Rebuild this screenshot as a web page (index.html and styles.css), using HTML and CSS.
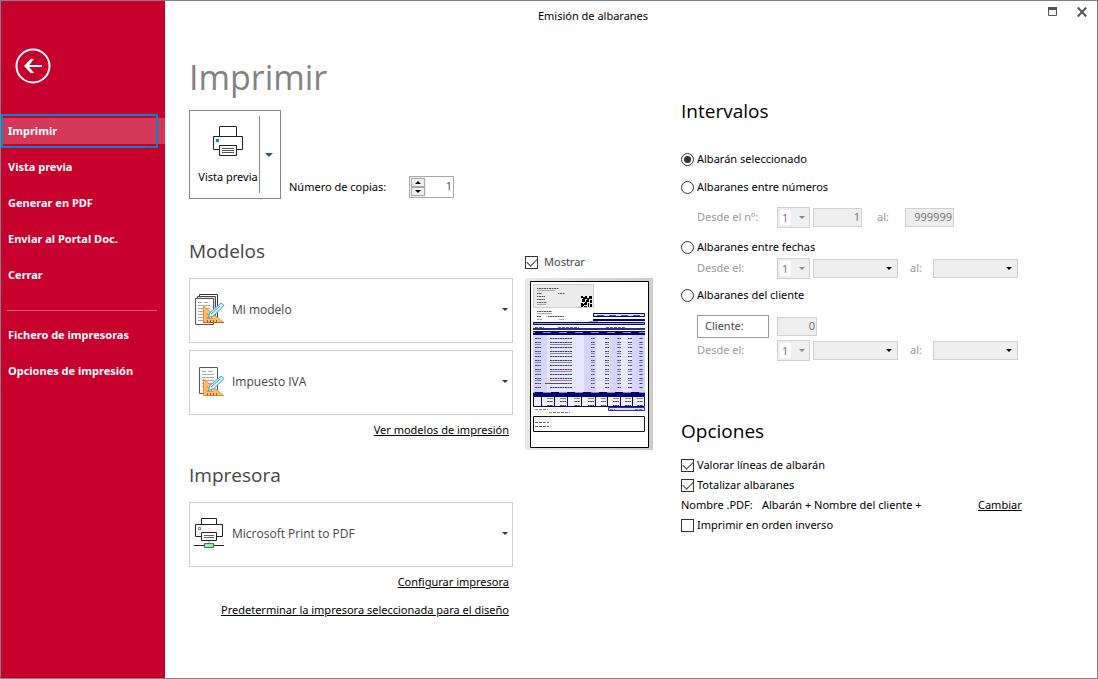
FILE: index.html
```html
<!DOCTYPE html>
<html lang="es">
<head>
<meta charset="utf-8">
<title>Emisión de albaranes</title>
<link rel="stylesheet" href="styles.css">
</head>
<body>
<div class="window">
  <aside class="sidebar">
    <button class="back" type="button" aria-label="Volver">
      <svg width="36" height="36" viewBox="0 0 36 36"><circle cx="18" cy="18" r="16.5" fill="none" stroke="#fff" stroke-width="2"/><path d="M27 18H11.500" fill="none" stroke="#fff" stroke-width="2"/><path d="M9 18l6.500-7H19l-5.500 7 5.500 7h-3.500z" fill="#fff"/></svg>
    </button>
    <nav class="menu">
      <a class="item current" href="#imprimir"><span>Imprimir</span></a>
      <a class="item" href="#vista"><span>Vista previa</span></a>
      <a class="item" href="#pdf"><span>Generar en PDF</span></a>
      <a class="item" href="#portal"><span>Enviar al Portal Doc.</span></a>
      <a class="item" href="#cerrar"><span>Cerrar</span></a>
      <hr class="rule">
      <a class="item" href="#fichero"><span>Fichero de impresoras</span></a>
      <a class="item" href="#opciones"><span>Opciones de impresión</span></a>
    </nav>
  </aside>

  <div class="content">
    <header class="titlebar">
      <span class="caption">Emisión de albaranes</span>
      <div class="winbuttons">
        <button type="button" aria-label="Maximizar"><svg width="9" height="10" viewBox="0 0 9 10"><path d="M.5 1v7.500h8V1" fill="none" stroke="#555"/><path d="M0 0h9v3H0z" fill="#555"/></svg></button>
        <button type="button" aria-label="Cerrar"><svg width="10" height="10" viewBox="0 0 10 10"><path d="M.8.5l8.400 9M9.200.5L.8 9.500" stroke="#555" stroke-width="2"/></svg></button>
      </div>
    </header>

    <main class="main">
      <section class="left">
        <h1>Imprimir</h1>
        <div class="toprow">
          <div class="split">
            <button class="preview-btn" type="button">
              <svg width="32" height="32" viewBox="0 0 32 32" fill="#fff" stroke="#222"><path d="M7.500 11V1.500h17V11"/><path d="M1.500 11.500h29v13h-29z"/><path d="M7.500 20.500h17v10h-17z"/><path d="M10 23.500h12M10 25.500h12M10 27.500h12" stroke="#555"/><path d="M4 14h3v3H4z" fill="#0f86c8" stroke="none"/></svg>
              <span>Vista previa</span>
            </button>
            <button class="split-arrow" type="button" aria-label="Más opciones"><i class="arrow blue"></i></button>
          </div>
          <label class="copies-label" for="copias">Número de copias:</label>
          <div class="spinner">
            <div class="steps">
              <button type="button" aria-label="Más"><i class="arrow up"></i></button>
              <button type="button" aria-label="Menos"><i class="arrow"></i></button>
            </div>
            <input id="copias" type="text" value="1">
          </div>
        </div>

        <div class="blocks">
          <div class="block">
            <h2 class="soft">Modelos</h2>
            <div class="cards">
              <label class="card">
                <svg width="32" height="34" viewBox="0 0 32 34"><path d="M5.500 5V1.500h18V28" fill="#fff" stroke="#333"/><path d="M3.500 5V3.500h18V29" fill="#ddd" stroke="#444"/><path d="M1.500 5.500h18v26h-18z" fill="#fff" stroke="#555"/><path d="M4 9.500h4m2 0h4M4 12.500h12M4 15.500h12M4 18.500h12M4 21.500h12M4 24.500h12M4 27.500h12" stroke="#aaa"/><path d="M9.500 13v16.500h20zM13 20.500l5.500 5H13z" fill="#fbbd6f" fill-rule="evenodd" stroke="#ef8a27"/><path d="M13.500 27v2.500m3-2.500v2.500m3-2.500v2.500m3-2.500v2.500" stroke="#a65a1c"/><path d="M9 29.500h21" stroke="#d4552a"/><path d="M14 24.500l2-5L27 10l3 2.500L19.500 23z" fill="#d3effa" stroke="#48a5d0"/><path d="M17 21L26 13" stroke="#48a5d0"/></svg>
                <select aria-label="Modelo"><option>Mi modelo</option></select><i class="arrow dark"></i>
              </label>
              <label class="card">
                <svg width="32" height="34" viewBox="0 0 32 34"><path d="M5.500 2.500h18v26h-18z" fill="#fff" stroke="#555"/><path d="M8 6.500h4m2 0h4M8 9.500h12M8 12.500h12M8 15.500h12M8 18.500h12M8 21.500h12" stroke="#aaa"/><path d="M9.500 14v16.500h20zM13 21.500l5.500 5H13z" fill="#fbbd6f" fill-rule="evenodd" stroke="#ef8a27"/><path d="M13.500 28v2.500m3-2.500v2.500m3-2.500v2.500m3-2.500v2.500" stroke="#a65a1c"/><path d="M14 25.500l2-5L27 11l3 2.500L19.500 24z" fill="#d3effa" stroke="#48a5d0"/><path d="M17 22l9-8" stroke="#48a5d0"/></svg>
                <select aria-label="Impuesto"><option>Impuesto IVA</option></select><i class="arrow dark"></i>
              </label>
            </div>
            <div class="links first"><a href="#modelos">Ver modelos de impresión</a></div>
            <h2 class="soft printer-title">Impresora</h2>
            <label class="card">
              <svg width="32" height="34" viewBox="0 0 32 34" fill="#fff" stroke="#222"><path d="M7.500 7V1.500h15V7"/><path d="M1.500 7.500h27v12h-27z"/><path d="M7.500 15.500h15v8h-15z"/><path d="M10 18.500h10M10 20.500h10" stroke="#666"/><path d="M4.500 10.500h2v2h-2z" stroke="#777"/><path d="M15 24v3" stroke="#999"/><path d="M0 28.500h30"/><path d="M10.500 26.500h9v4h-9z" fill="#b8dcb8" stroke="#119a35"/></svg>
              <select aria-label="Impresora"><option>Microsoft Print to PDF</option></select><i class="arrow dark"></i>
            </label>
            <div class="links"><a href="#configurar">Configurar impresora</a><a href="#predeterminar">Predeterminar la impresora seleccionada para el diseño</a></div>
          </div>

          <div class="thumb">
            <label class="check"><input type="checkbox" checked><span class="gray">Mostrar</span></label>
            <svg class="sheet" width="128" height="172" viewBox="0 0 128 172">
              <defs>
                <linearGradient id="shade"><stop offset="0" stop-color="#e8e8e8"/><stop offset="1" stop-color="#cccccc"/></linearGradient>
                <pattern id="num" width="30" height="9" patternUnits="userSpaceOnUse"><path d="M0 1.500h30M0 3.500h30M0 6.500h30" stroke="#8884a4"/><path d="M0 1.500h30M0 6.500h30" stroke="#44425f" stroke-dasharray="2 1 1 1"/></pattern>
                <pattern id="white" width="16" height="4" patternUnits="userSpaceOnUse"><path d="M2 2.500h8" stroke="#8f8fc8"/></pattern>
              </defs>
              <path d="M0 0h128v172H0z" fill="url(#shade)"/>
              <path d="M5.500 3.500h118v166h-118z" fill="#fff" stroke="#000"/>
              <path d="M8.500 6.500h60v23h-60z" fill="#ebebeb" stroke="#d0d0d0"/>
              <path d="M12 10.500h22M12 12.500h18M12 15.500h5M33 15.500h7M12 18.500h8M12 21.500h8M12 24.500h10M12 26.500h9M12 33.500h15M12 35.500h15M12 38.500h4M23 38.500h16M12 41.500h5M34 41.500h5M64 43.500h9" stroke="#aaa"/>
              <path d="M12 10.500h22M12 15.500h5M33 15.500h7M12 18.500h8M12 21.500h8M12 24.500h10M12 33.500h15M12 38.500h4M23 38.500h16" stroke="#555" stroke-dasharray="1 1 2 1"/>
              <path d="M56 18h2v2h-2zM60 18h2v3h-2zM64 18h3v3h-3zM57 21h3v3h-3zM61 22h3v2h-3zM65 22h2v3h-2zM56 25h2v4h-2zM59 25h3v2h-3zM63 25h1v4h-1zM59 28h3v1h-3zM65 26h2v3h-2zM58 19h2v2h-2zM62 20h2v2h-2zM60 24h2v1h-2zM58 26h1v2h-1z" fill="#000"/>
              <path d="M68.500 35.500h51v3h-51z" fill="#ddf" stroke="#00007b"/><path d="M72 37.500h44" stroke="#555" stroke-dasharray="7 5"/>
              <path d="M68 42h52" stroke="#00007b" stroke-width="2"/>
              <path d="M8.500 44.500h111v2h-111z" fill="#aab" stroke="#00007b"/>
              <path d="M10 49.500h9M33 49.500h21M81 49.500h20" stroke="#666" stroke-dasharray="3 1"/>
              <path d="M8 50h112v2H8z" fill="#2b2b93"/><path d="M8 53h112v4H8z" fill="#00006c"/><path d="M8 53h112v4H8z" fill="url(#white)"/>
              <path d="M8 57h112v57H8z" fill="#e7e7ff"/>
              <path d="M8 57h14v57H8zM59 57h12v57H59zM85 57h10v57H85zM107 57h13v57h-13z" fill="#d5d5ff"/>
              <path d="M10 58h6v53h-6zM25 58h22v53H25zM66 58h4v53h-4zM80 58h4v53h-4zM92 58h4v53h-4zM103 58h4v53h-4zM114 58h4v53h-4z" fill="url(#num)"/>
              <path d="M20 105.500h20" stroke="#744"/>
              <path d="M8 114h112v4H8z" fill="#00006c"/><path d="M8 114h112v4H8z" fill="url(#white)"/>
              <path d="M8.500 118.500h111v10h-111z" fill="#f2f2f2" stroke="#00007b"/>
              <path d="M16.500 118v11M29.500 118v11M42.500 118v11M56.500 118v11M70.500 118v11M82.500 118v11M95.500 118v11M107.500 118v11" stroke="#00007b"/>
              <path d="M22 120h6v8h-6zM35 120h6v8h-6zM49 120h6v8h-6zM63 120h6v8h-6zM76 120h5v8h-5zM88 120h6v8h-6zM100 120h6v8h-6zM112 120h6v8h-6z" fill="url(#num)"/>
              <path d="M83.500 129.500h36v3h-36z" fill="#ddf" stroke="#2b2bb0"/><path d="M10 131.500h13M24 134.500h21M85 131.500h5M110 131.500h8" stroke="#887" stroke-dasharray="3 1"/>
              <path d="M8.500 138.500h111v15h-111z" fill="#fff" stroke="#111"/><path d="M10 144.500h14M10 148.500h14" stroke="#666" stroke-dasharray="3 1"/>
            </svg>
          </div>
        </div>
      </section>

      <section class="right">
        <h2>Intervalos</h2>
        <div class="ranges">
          <label class="radio"><input type="radio" name="rango" checked>Albarán seleccionado</label>
          <label class="radio"><input type="radio" name="rango">Albaranes entre números</label>
          <div class="fields numbers">
            <label for="desde-n">Desde el nº:</label>
            <span class="drop serie"><select disabled aria-label="Serie"><option>1</option></select><i class="arrow dim"></i></span>
            <input class="num" id="desde-n" type="text" value="1" disabled>
            <label class="to" for="hasta-n">al:</label>
            <input class="num" id="hasta-n" type="text" value="999999" disabled>
          </div>
          <label class="radio"><input type="radio" name="rango">Albaranes entre fechas</label>
          <div class="fields dates">
            <label for="desde-f">Desde el:</label>
            <span class="drop serie"><select disabled aria-label="Serie"><option>1</option></select><i class="arrow dim"></i></span>
            <span class="drop"><select id="desde-f" disabled></select><i class="arrow"></i></span>
            <label class="to" for="hasta-f">al:</label>
            <span class="drop"><select id="hasta-f" disabled></select><i class="arrow"></i></span>
          </div>
          <label class="radio last"><input type="radio" name="rango">Albaranes del cliente</label>
          <div class="fields client">
            <button class="client-btn" type="button">Cliente:</button>
            <input class="num small" type="text" value="0" aria-label="Código de cliente" disabled>
          </div>
          <div class="fields dates">
            <label for="desde-c">Desde el:</label>
            <span class="drop serie"><select disabled aria-label="Serie"><option>1</option></select><i class="arrow dim"></i></span>
            <span class="drop"><select id="desde-c" disabled></select><i class="arrow"></i></span>
            <label class="to" for="hasta-c">al:</label>
            <span class="drop"><select id="hasta-c" disabled></select><i class="arrow"></i></span>
          </div>
        </div>

        <h2>Opciones</h2>
        <div class="options">
          <label class="check"><input type="checkbox" checked>Valorar líneas de albarán</label>
          <label class="check"><input type="checkbox" checked>Totalizar albaranes</label>
          <div class="pdfname"><span>Nombre .PDF:</span><span>Albarán + Nombre del cliente +</span><a href="#cambiar">Cambiar</a></div>
          <label class="check"><input type="checkbox">Imprimir en orden inverso</label>
        </div>
      </section>
    </main>
  </div>
</div>
</body>
</html>
```
FILE: styles.css
```css
* { box-sizing: border-box; }
body { margin: 0; font: 11px/20px "Noto Sans", "Open Sans", sans-serif; color: #000; background: #fff; }
button, input, select { font: inherit; color: inherit; margin: 0; padding: 0; border-radius: 0; }
button { background: none; border: 0; }
a { color: inherit; }
svg { display: block; flex: none; }
h1, h2 { margin: 0; font-family: "Open Sans", "Noto Sans", sans-serif; font-weight: 400; }

.window { display: flex; min-height: 100vh; border: 1px solid #808080; }

.sidebar { width: 164px; flex: none; background: #c8002d; color: #fff; padding-top: 47px; }
.back { display: block; margin-left: 14px; }
.menu { margin-top: 29px; }
.item { display: block; position: relative; padding: 5px 0; font-weight: 700; line-height: 26px; color: #fff; text-decoration: none; }
.item span { display: block; padding-left: 7px; }
.current span { background: #d33858; }
.current::after { content: ""; position: absolute; inset: 1px 7px 1px 0; border: 2px solid #0a84c8; }
.rule { height: 1px; margin: 17px 8px 6px 6px; border: 0; background: #df6078; }

.content { flex: 1; min-width: 0; }
.titlebar { display: flex; justify-content: flex-end; height: 30px; position: relative; }
.caption { position: absolute; inset: 5px 0 auto 0; margin-right: 76px; text-align: center; }
.winbuttons { display: flex; gap: 20px; align-items: center; padding: 0 10px 8px 0; position: relative; }

.main { display: flex; gap: 28px; padding: 0 24px; }
.left { flex: none; width: 464px; }
.right { flex: 1; min-width: 0; padding-top: 60px; }
h1 { font-size: 34px; line-height: 48px; color: #828282; padding: 22px 0 9px; }
h2 { font-size: 19px; line-height: 40px; }
.soft { color: #444; }

.toprow { display: flex; align-items: flex-end; }
.split { display: flex; width: 92px; height: 89px; border: 1px solid #888; }
.preview-btn { flex: 1; display: flex; flex-direction: column; align-items: center; gap: 10px; padding: 14px 0 0 7px; white-space: nowrap; }
.split-arrow { width: 21px; margin: 5px 0; border-left: 1px solid #888; display: flex; align-items: center; justify-content: center; padding-right: 3px; }
.copies-label { width: 120px; margin: 0 0 2px 8px; }
.spinner { display: flex; width: 45px; height: 22px; border: 1px solid #aaa; background: #f0f0f0; margin-bottom: 1px; }
.steps { display: flex; flex-direction: column; width: 16px; padding: 1px; }
.steps button { flex: 1; display: flex; align-items: center; justify-content: center; border: 1px solid #aaa; }
.spinner input { flex: 1; min-width: 0; border: 0; background: #fff; text-align: right; padding: 0 1px 3px 0; color: #555; }

.arrow { width: 0; height: 0; border: 3px solid transparent; border-top-color: #000; border-bottom-width: 0; pointer-events: none; }
.arrow.up { border: 3px solid transparent; border-bottom-color: #000; border-top-width: 0; }
.arrow.blue { border-width: 4px 4px 0; border-top-color: #3b5680; }
.arrow.dark { border-top-color: #333; }
.arrow.dim { border-top-color: #888; }

.blocks { display: flex; gap: 12px; padding-top: 32px; }
.block { width: 324px; flex: none; }
.cards { display: grid; gap: 7px; padding-top: 7px; }
.card { display: flex; align-items: center; height: 65px; border: 1px solid #d0d0d0; padding: 0 4px 2px; font-family: "Open Sans", "Noto Sans", sans-serif; font-size: 12px; color: #444; }
.card select { flex: 1; min-width: 0; margin-left: 6px; height: 30px; border: 0; background: none; appearance: none; }
.links { display: flex; flex-direction: column; align-items: flex-end; gap: 8px; padding: 5px 4px 0 0; }
.printer-title { padding-bottom: 7px; margin-top: 15px; }

.thumb { padding-top: 21px; }
.sheet { margin-top: 6px; }
.gray { margin-left: 3px; color: #444; }
.check, .radio { display: flex; align-items: center; gap: 3px; height: 20px; }
.check input, .radio input { appearance: none; width: 13px; height: 13px; flex: none; border: 1px solid #333; display: grid; place-items: center; background: #fff; }
.check input:checked::after { content: ""; width: 9px; height: 5px; border: solid #444; border-width: 0 0 1px 1px; transform: translateY(-1px) rotate(-45deg); }
.radio input { border-radius: 50%; }
.radio input:checked::after { content: ""; width: 7px; height: 7px; border-radius: 50%; background: #333; }

.ranges { padding: 18px 0 50px; }
.radio + .radio { margin-top: 8px; }
.radio.last { margin-top: 6px; }
.fields { display: grid; align-items: center; height: 22px; margin-left: 16px; color: #999; }
.dates { grid-template-columns: 80px 36px 85px 35px 85px; }
.numbers { grid-template-columns: 80px 36px 49px 43px 49px; height: 40px; }
.client { grid-template-columns: 80px 40px; height: 34px; padding-top: 8px; }
.to { margin-left: 12px; }
.numbers .to { margin-left: 15px; }
.drop { display: grid; grid-template-areas: "a"; align-items: center; background: #efefef; border: 1px solid #d0d0d0; height: 19px; }
.drop > * { grid-area: a; }
.drop select { width: 100%; height: 17px; border: 0; background: none; appearance: none; opacity: 1; }
.drop .arrow { justify-self: end; margin-right: 5px; }
.serie { height: 21px; width: 33px; }
.serie .arrow { margin-right: 4px; }
.drop.serie select { width: 11px; height: 15px; line-height: 15px; margin-left: 2px; padding-left: 2px; background: #fff; color: #8a6a98; }
.num { height: 19px; width: 49px; border: 1px solid #d0d0d0; background: #efefef; color: #777; text-align: right; padding: 0 1px 1px; }
.small { width: 40px; }
.client-btn { width: 72px; height: 23px; border: 1px solid #999; color: #444; text-align: left; padding-left: 7px; }

.options { padding-top: 4px; }
.pdfname { display: grid; grid-template-columns: 81px 216px auto; white-space: nowrap; }
```
